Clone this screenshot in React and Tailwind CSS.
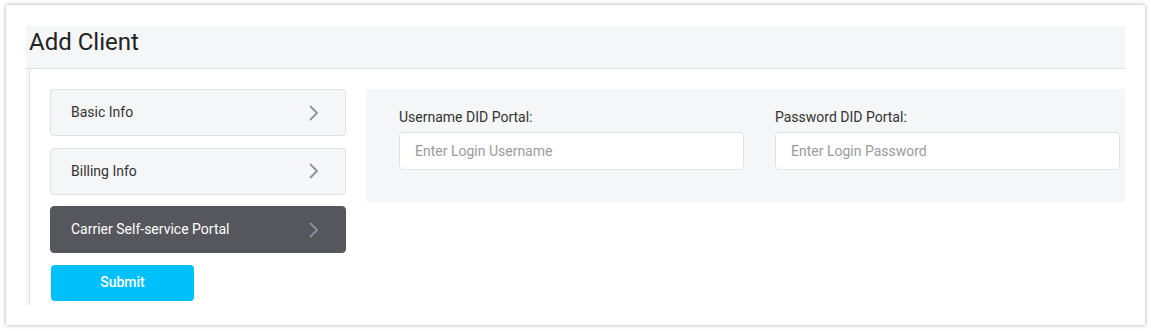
import React from "react";

function Chevron({ className }) {
  return (
    <svg viewBox="0 0 10 16" className={className} fill="none">
      <path d="M1.5 1.5 L8 8 L1.5 14.5" stroke="currentColor" strokeWidth="1.8" strokeLinecap="round" strokeLinejoin="round" />
    </svg>
  );
}

function Tab({ label, active }) {
  return (
    <div
      className={`flex h-[47px] items-center justify-between rounded-[4px] border pl-[20px] pr-[26px] text-[14px] ${
        active
          ? "border-[#55575c] bg-[#55575c] text-white"
          : "border-[#dfe1e5] bg-[#f5f6f8] text-[#333]"
      }`}
    >
      <span>{label}</span>
      <Chevron className={`h-[16px] w-[10px] ${active ? "text-[#8792a5]" : "text-[#8a93a3]"}`} />
    </div>
  );
}

function Field({ label, placeholder }) {
  return (
    <div className="flex w-[345px] flex-col">
      <label className="mb-[7px] h-[16px] text-[14px] leading-[16px] text-[#333]">{label}</label>
      <input
        className="h-[38px] rounded-[4px] border border-[#dfe1e5] bg-white px-[15px] text-[14px] text-[#333] outline-none placeholder:text-[#9b9b9b]"
        placeholder={placeholder}
      />
    </div>
  );
}

export default function App() {
  return (
    <div className="h-[331px] w-[1151px] bg-white pl-[6px] pt-[5px] font-['Roboto',sans-serif]">
      <div className="h-[320px] w-[1139px] bg-white pl-[20px] pt-[21px] shadow-[0_0_4px_rgba(0,0,0,0.35)]">
        <div className="flex h-[279px] w-[1099px] flex-col overflow-hidden bg-[#f5f6f8]">
          <div className="h-[43px] shrink-0 border-b border-[#dde0e4] pl-[3px] pt-[1px] text-[24px] leading-[30px] text-[#222]">
            Add Client
          </div>
          <div className="ml-[3px] flex flex-1 gap-[20px] rounded-tl-[5px] border-l border-[#dde0e4] bg-white pl-[20px] pt-[20px]">
            <div className="flex w-[296px] shrink-0 flex-col gap-[11.5px]">
              <Tab label="Basic Info" />
              <Tab label="Billing Info" />
              <Tab label="Carrier Self-service Portal" active />
              <button className="ml-[1px] h-[36px] w-[143px] rounded-[4px] bg-[#00c0fc] text-[14px] font-medium text-white">
                Submit
              </button>
            </div>
            <div className="flex h-[113px] w-[790px] shrink-0 gap-[31px] rounded-l-[4px] bg-[#f5f6f8] pl-[33px] pt-[20px]">
              <Field label="Username DID Portal:" placeholder="Enter Login Username" />
              <Field label="Password DID Portal:" placeholder="Enter Login Password" />
            </div>
          </div>
        </div>
      </div>
    </div>
  );
}
